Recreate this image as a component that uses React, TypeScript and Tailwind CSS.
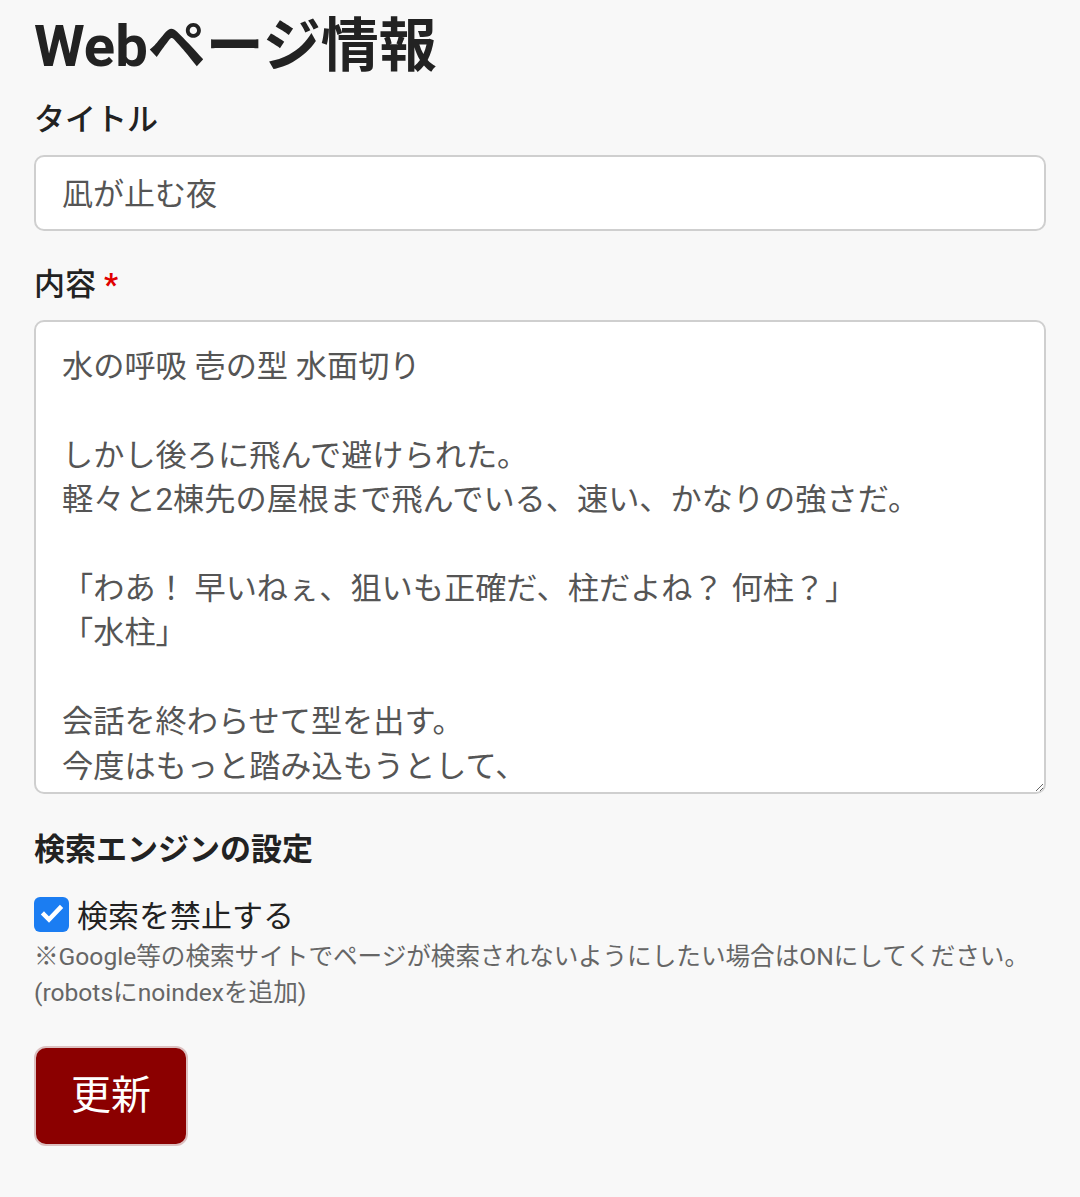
import React from 'react';

const CONTENT = `水の呼吸 壱の型 水面切り

しかし後ろに飛んで避けられた。
軽々と2棟先の屋根まで飛んでいる、速い、かなりの強さだ。

「わあ！ 早いねぇ、狙いも正確だ、柱だよね？ 何柱？」
「水柱」

会話を終わらせて型を出す。
今度はもっと踏み込もうとして、`;

export default function App() {
  return (
    <div className="min-h-[1197px] bg-[#f8f8f8] px-[34px] pt-[11px] pb-[50px] font-['Roboto','Noto_Sans_CJK_JP',sans-serif] text-[#222]">
      {/* Header */}
      <h1 className="text-[58px] leading-[70px] font-bold">Webページ情報</h1>

      {/* Title field */}
      <label className="block mt-[17px] text-[31px] leading-[44px] font-medium">タイトル</label>
      <input
        type="text"
        defaultValue="凪が止む夜"
        className="mt-[13px] block w-full h-[76px] bg-white border-2 border-[#cfcfcf] rounded-[10px] px-[26px] pb-[3px] text-[31px] text-[#555] outline-none"
      />

      {/* Content field */}
      <label className="flex items-center mt-[32px] text-[31px] leading-[44px] font-medium">
        内容<span className="ml-[8px] text-[#e00000] font-bold">*</span>
      </label>
      <textarea
        defaultValue={CONTENT}
        className="mt-[13px] block w-full h-[474px] bg-white border-2 border-[#cfcfcf] rounded-[10px] px-[26px] pt-[23px] pb-[10px] text-[31.2px] leading-[44.4px] text-[#555] outline-none overflow-hidden resize-y"
      />

      {/* Search engine settings */}
      <h2 className="mt-[34px] text-[31px] leading-[44px] font-bold">検索エンジンの設定</h2>
      <label className="mt-[17px] flex items-center gap-[8px]">
        <span className="w-[35px] h-[35px] rounded-[6px] bg-[#1b7df2] flex items-center justify-center">
          <svg width="24" height="24" viewBox="0 0 24 24" fill="none">
            <path d="M4 12.5l5 5L20 6" stroke="#fff" strokeWidth="4.5" strokeLinecap="square" />
          </svg>
        </span>
        <span className="pt-[6px] text-[31px] leading-[44px]">検索を禁止する</span>
      </label>
      <p className="mt-0 text-[24.6px] leading-[36px] text-[#666]">
        ※Google等の検索サイトでページが検索されないようにしたい場合はONにしてください。
        <br />
        (robotsにnoindexを追加)
      </p>

      <button className="mt-[35px] w-[154px] h-[100px] rounded-[12px] bg-[#8b0000] border-2 border-[#dcc0c0] text-white text-[40px]">
        更新
      </button>
    </div>
  );
}
